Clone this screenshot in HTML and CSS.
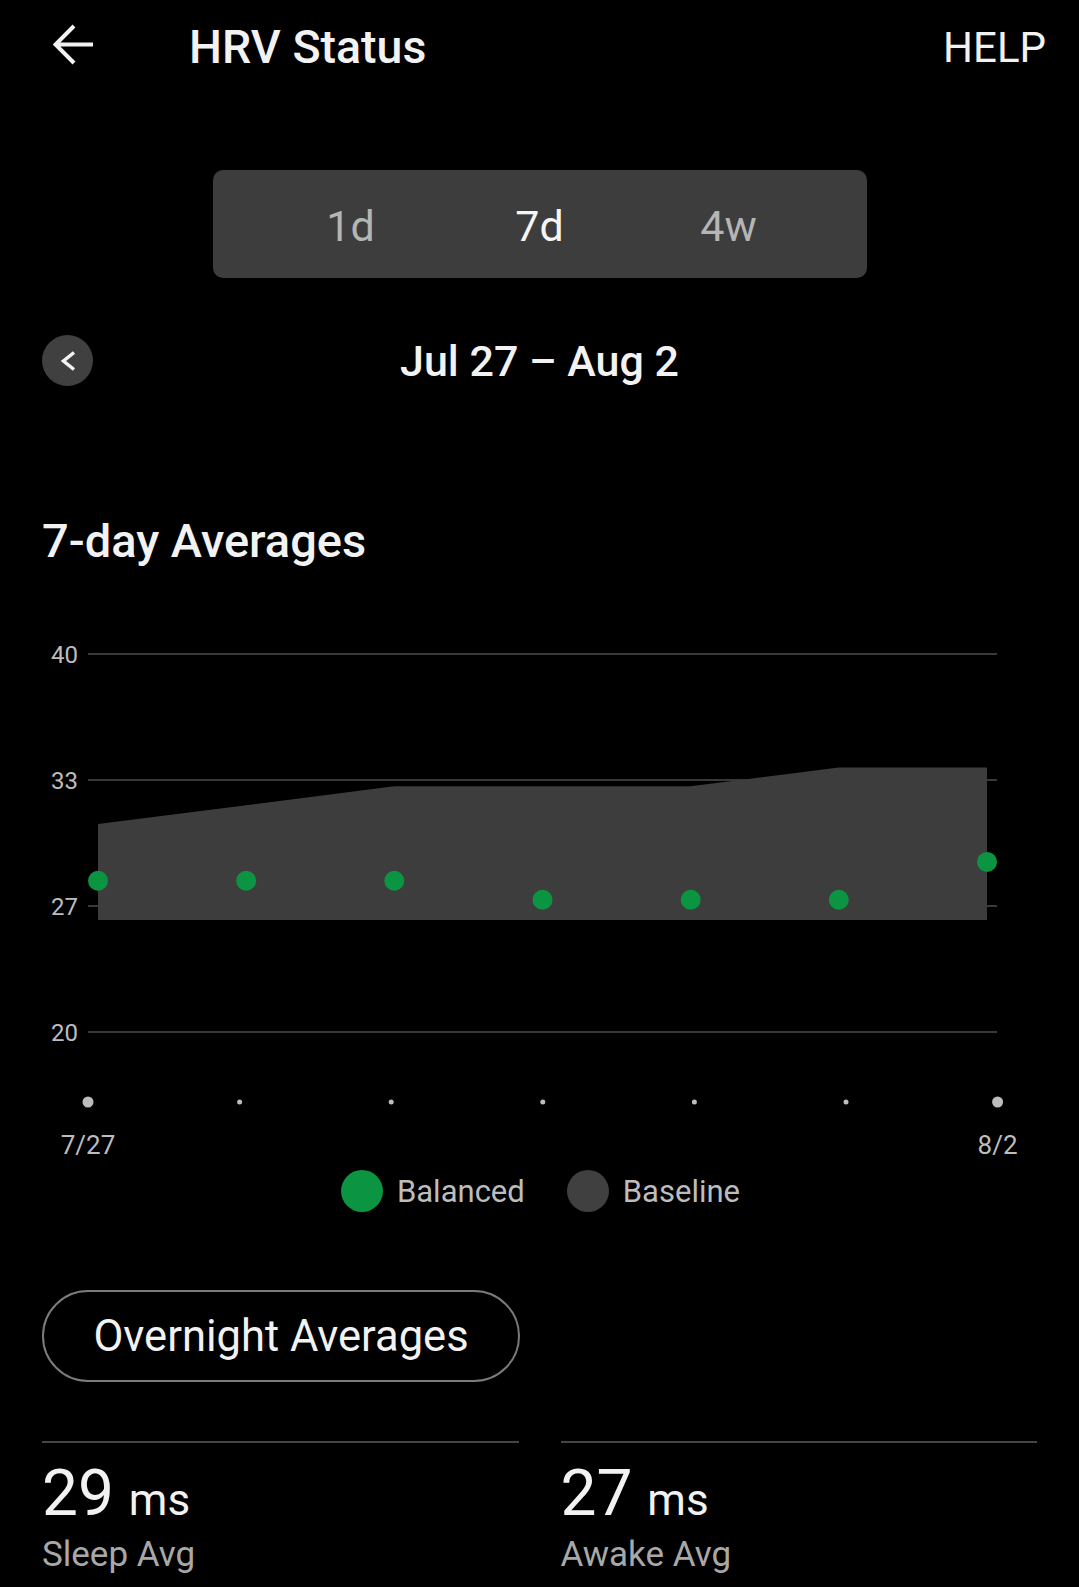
FILE: index.html
```html
<!DOCTYPE html>
<html lang="en">
<head>
  <meta charset="UTF-8" />
  <meta name="viewport" content="width=device-width, initial-scale=1.0"/>
  <title>HRV Status</title>
  <link rel="stylesheet" href="styles.css">
</head>
<body>
  <header class="topbar">
    <svg class="back" width="41" height="41" viewBox="0 0 41 41">
      <path d="M3 20.5 H40 M21 2 L2.5 20.5 L21 39" fill="none" stroke="#f2f2f2" stroke-width="4"/>
    </svg>
    <h1 class="title">HRV Status</h1>
    <a class="help">HELP</a>
  </header>

  <div class="range">
    <span class="range-item">1d</span>
    <span class="range-item active">7d</span>
    <span class="range-item">4w</span>
  </div>

  <div class="period">
    <button class="prev">
      <svg width="51" height="51" viewBox="0 0 51 51">
        <path d="M32 17.5 L21.5 26 L32 34.5" fill="none" stroke="#f2f2f2" stroke-width="3.5"/>
      </svg>
    </button>
    <div class="period-label">Jul 27 – Aug 2</div>
    <span></span>
  </div>

  <h2 class="section-title">7-day Averages</h2>

  <!-- chart: y 40..20 over 378px, gridlines every 126px -->
  <svg class="chart" width="1079" height="560" viewBox="0 0 1079 560">
    <g stroke="#383838" stroke-width="2">
      <line x1="88" y1="54" x2="997" y2="54"/>
      <line x1="88" y1="180" x2="997" y2="180"/>
      <line x1="88" y1="306" x2="997" y2="306"/>
      <line x1="88" y1="432" x2="997" y2="432"/>
    </g>
    <g class="ylabel" text-anchor="end">
      <text x="78" y="62.5">40</text>
      <text x="78" y="188.5">33</text>
      <text x="78" y="314.5">27</text>
      <text x="78" y="440.5">20</text>
    </g>
    <polygon fill="#3d3d3d" points="98,224.1 246.2,205.2 394.3,186.3 542.5,186.3 690.7,186.3 838.8,167.4 987,167.4 987,320 98,320"/>
    <g fill="#0b9542">
      <circle cx="98" cy="280.8" r="10"/>
      <circle cx="246.2" cy="280.8" r="10"/>
      <circle cx="394.3" cy="280.8" r="10"/>
      <circle cx="542.5" cy="299.7" r="10"/>
      <circle cx="690.7" cy="299.7" r="10"/>
      <circle cx="838.8" cy="299.7" r="10"/>
      <circle cx="987" cy="261.9" r="10"/>
    </g>
    <g fill="#bdbdbd">
      <circle cx="88" cy="502" r="5.5"/>
      <circle cx="239.6" cy="502" r="2.5"/>
      <circle cx="391.2" cy="502" r="2.5"/>
      <circle cx="542.8" cy="502" r="2.5"/>
      <circle cx="694.4" cy="502" r="2.5"/>
      <circle cx="846" cy="502" r="2.5"/>
      <circle cx="997.6" cy="502" r="5.5"/>
    </g>
    <g class="xlabel" text-anchor="middle">
      <text x="88" y="554">7/27</text>
      <text x="997.6" y="554">8/2</text>
    </g>
  </svg>

  <div class="legend">
    <div class="legend-item"><span class="swatch green"></span>Balanced</div>
    <div class="legend-item"><span class="swatch grey"></span>Baseline</div>
  </div>

  <div class="content">
    <button class="pill">Overnight Averages</button>

    <div class="stats">
      <div class="stat">
        <div class="stat-value">29<span class="unit"> ms</span></div>
        <div class="stat-label">Sleep Avg</div>
      </div>
      <div class="stat">
        <div class="stat-value">27<span class="unit"> ms</span></div>
        <div class="stat-label">Awake Avg</div>
      </div>
    </div>
  </div>
</body>
</html>
```

FILE: styles.css
```css
body {
  font-family: Roboto, "Liberation Sans", sans-serif;
  background: #000;
  color: #f2f2f2;
  margin: 0;
  padding: 0;
  width: 1079px;
  overflow: hidden;
}
.topbar {
  display: flex;
  align-items: center;
  height: 86px;
  padding: 4px 33px 0 53px;
}
.back {
  display: block;
  margin-bottom: 5px;
}
.title {
  margin: 0 0 0 95px;
  font-size: 46.5px;
  font-weight: 500;
}
.help {
  margin-left: auto;
  font-size: 42px;
  color: #f2f2f2;
}
.range {
  display: grid;
  grid-template-columns: repeat(3, 189px);
  justify-content: center;
  align-items: center;
  box-sizing: border-box;
  width: 654px;
  height: 108px;
  margin: 80px auto 0;
  padding-top: 4px;
  background: #3d3d3d;
  border-radius: 10px;
}
.range-item {
  text-align: center;
  font-size: 43px;
  color: #b5b5b5;
}
.range-item.active {
  color: #f5f5f5;
}
.period {
  display: grid;
  grid-template-columns: 51px 1fr 51px;
  align-items: center;
  height: 51px;
  margin-top: 57px;
  padding: 0 42px;
}
.prev {
  width: 51px;
  height: 51px;
  padding: 0;
  border: none;
  border-radius: 50%;
  background: #404040;
}
.prev svg {
  display: block;
}
.period-label {
  text-align: center;
  font-size: 43px;
  font-weight: 500;
}
.section-title {
  margin: 128px 0 0 42px;
  font-size: 47px;
  font-weight: 500;
  line-height: 54px;
}
.chart {
  display: block;
  margin-top: 32px;
}
.ylabel {
  font-size: 24px;
  fill: #bdbdbd;
}
.xlabel {
  font-size: 26px;
  fill: #bdbdbd;
}
.legend {
  display: flex;
  justify-content: center;
  gap: 42px;
  margin-top: 10px;
  padding-left: 2px;
}
.legend-item {
  display: flex;
  align-items: center;
  gap: 14px;
  font-size: 31px;
  color: #bdbdbd;
}
.swatch {
  width: 42px;
  height: 42px;
  border-radius: 50%;
}
.swatch.green {
  background: #0b9542;
}
.swatch.grey {
  background: #404040;
}
.content {
  padding: 0 42px;
}
.pill {
  display: block;
  box-sizing: border-box;
  width: 478px;
  height: 92px;
  margin-top: 78px;
  padding: 0;
  background: #000;
  border: 2px solid #7a7a7a;
  border-radius: 46px;
  font-family: inherit;
  font-size: 43.5px;
  color: #f2f2f2;
}
.stats {
  display: grid;
  grid-template-columns: 1fr 1fr;
  gap: 42px;
  margin-top: 59px;
}
.stat {
  border-top: 2px solid #444;
  padding-top: 16px;
}
.stat-value {
  font-size: 64px;
  line-height: 70px;
}
.unit {
  font-size: 44px;
  line-height: 1;
  margin-left: 4px;
}
.stat-label {
  margin-top: 6px;
  font-size: 35px;
  line-height: 40px;
  color: #a8a8a8;
}
```
